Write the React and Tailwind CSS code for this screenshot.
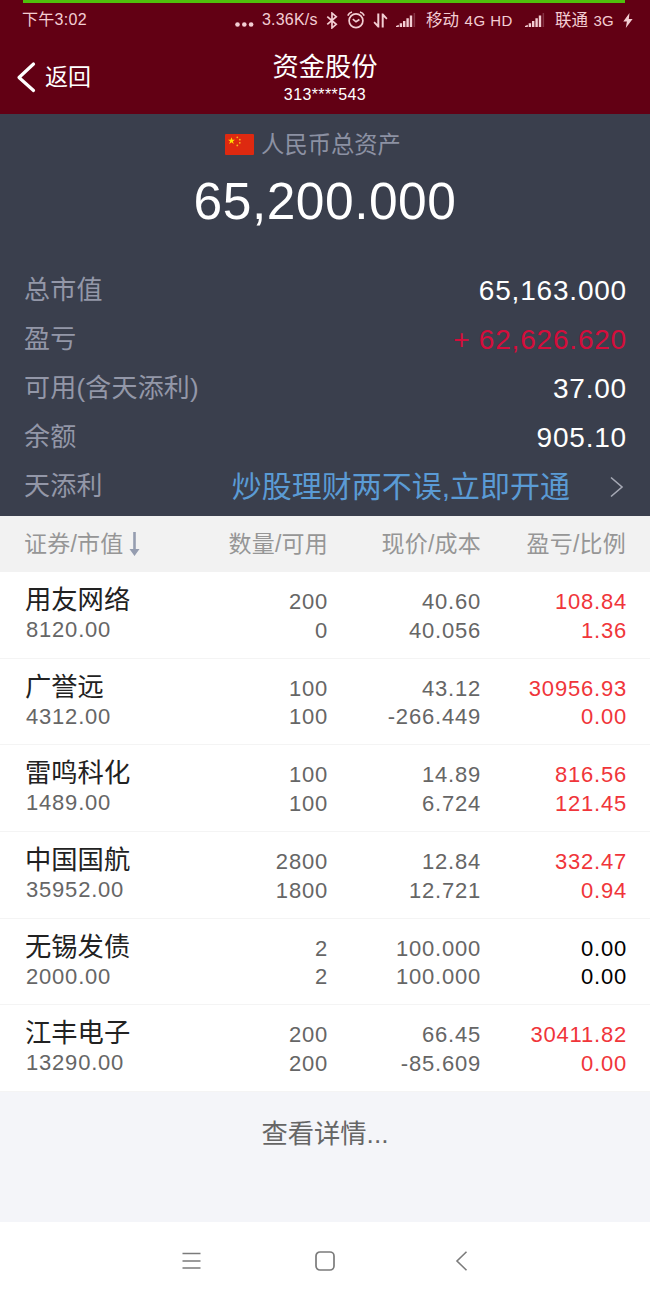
const summary = [
  { label: "总市值", value: "65,163.000", color: "text-white" },
  { label: "盈亏", value: "+ 62,626.620", color: "text-[#d40d3b]" },
  { label: "可用(含天添利)", value: "37.00", color: "text-white" },
  { label: "余额", value: "905.10", color: "text-white" },
];

const holdings = [
  { name: "用友网络", value: "8120.00", qty: "200", available: "0", price: "40.60", cost: "40.056", profit: "108.84", ratio: "1.36" },
  { name: "广誉远", value: "4312.00", qty: "100", available: "100", price: "43.12", cost: "-266.449", profit: "30956.93", ratio: "0.00" },
  { name: "雷鸣科化", value: "1489.00", qty: "100", available: "100", price: "14.89", cost: "6.724", profit: "816.56", ratio: "121.45" },
  { name: "中国国航", value: "35952.00", qty: "2800", available: "1800", price: "12.84", cost: "12.721", profit: "332.47", ratio: "0.94" },
  { name: "无锡发债", value: "2000.00", qty: "2", available: "2", price: "100.000", cost: "100.000", profit: "0.00", ratio: "0.00", flat: true },
  { name: "江丰电子", value: "13290.00", qty: "200", available: "200", price: "66.45", cost: "-85.609", profit: "30411.82", ratio: "0.00" },
];

function Signal() {
  return (
    <svg width="20" height="14" viewBox="0 0 20 14" fill="currentColor">
      <path d="M0 14V13L2.8 11.8V14zM3.7 10.2h2.4V14H3.7zM7 8h2.4v6H7zM10.4 5.200h2.400V14h-2.400zM13.800 2.500h2.400V14h-2.400z" />
      <path d="M17.600 0h1.500v14h-1.500z" opacity=".25" />
    </svg>
  );
}

function StatusBar() {
  return (
    <div className="flex h-10 items-center pl-[22px] pr-[17px] text-[#f3cdd3]">
      <span className="text-[16px] tracking-[0.3px]">下午3:02</span>
      <svg className="ml-auto mt-[9px]" width="19" height="5" viewBox="0 0 19 5" fill="currentColor">
        <circle cx="2.5" cy="2.5" r="2.3" />
        <circle cx="9.3" cy="2.5" r="2.3" />
        <circle cx="16.1" cy="2.5" r="2.3" />
      </svg>
      <span className="ml-[8px] w-[57px] whitespace-nowrap text-[16px] tracking-[0.2px]">3.36K/s</span>
      <svg className="ml-[7px]" width="12" height="17" viewBox="0 0 12 18" fill="none" stroke="currentColor" strokeWidth="1.8">
        <path d="M1 5l9.5 8L6 16.800V1.200L10.500 5 1 13" />
      </svg>
      <svg className="ml-[9px]" width="18" height="18" viewBox="0 0 18 18" fill="none" stroke="currentColor" strokeWidth="1.7">
        <circle cx="9" cy="9.7" r="6.9" />
        <path d="M5.8 8.2L9 10.8l3.4-2.3M.8 4.6Q2 1.8 5 1M17.2 4.6Q16 1.8 13 1" />
      </svg>
      <svg className="ml-[8px]" width="15" height="15" viewBox="0 0 15 15" fill="currentColor">
        <path d="M4.300 .5h2v14h-1.500L.5 9.800l1.100-1.200L4.300 11zM8.700 14.500h2V4l2.700 2.400 1.100-1.200L10.200 .5H8.700z" />
      </svg>
      <span className="ml-[8px]"><Signal /></span>
      <span className="ml-[10px] w-[92px] whitespace-nowrap text-[16.5px]">
        移动 <span className="ml-[1px] text-[15px] tracking-[0.5px]">4G HD</span>
      </span>
      <span className="ml-[7px]"><Signal /></span>
      <span className="ml-[10px] w-[62px] whitespace-nowrap text-[16.5px]">
        联通 <span className="ml-[1px] text-[15px]">3G</span>
      </span>
      <svg className="ml-[6px]" width="10" height="15" viewBox="0 0 10 15" fill="currentColor">
        <path d="M6.5 0L.3 8.4h3.6L2.8 15 9.6 5.9H5.8z" />
      </svg>
    </div>
  );
}

function Flag() {
  return (
    <svg width="29" height="21" viewBox="0 0 29 21">
      <rect width="29" height="21" rx="1" fill="#de2910" />
      <path d="M6.500 3.200l.9 2.500h2.600L7.900 7.300l.8 2.600-2.200-1.600-2.200 1.600.8-2.600L3 5.700h2.600z" fill="#ffde00" />
      <g fill="#f8b51c">
        <circle cx="12.300" cy="3.300" r=".9" />
        <circle cx="14.800" cy="5.700" r=".9" />
        <circle cx="14.800" cy="8.800" r=".9" />
        <circle cx="12.300" cy="11.400" r=".9" />
      </g>
    </svg>
  );
}

export default function App() {
  return (
    <div className="flex h-[1300px] w-[650px] flex-col overflow-hidden bg-white font-['Liberation_Sans','Noto_Sans_CJK_SC',sans-serif]">
      <header className="relative h-[114px] bg-[#620014] text-white">
        <div className="absolute left-[23px] top-0 h-[3px] w-[602px] bg-[#4fc00c]" />
        <StatusBar />
        <div className="grid h-[74px] grid-cols-[1fr_200px_1fr]">
          <div className="flex items-center pl-[16px]">
            <svg width="20" height="32" viewBox="0 0 20 32" fill="none" stroke="currentColor" strokeWidth="3.2" strokeLinecap="round" strokeLinejoin="round">
              <path d="M17.5 3L3 16.5 17.5 29.5" />
            </svg>
            <span className="ml-[9px] text-[23px]">返回</span>
          </div>
          <div className="text-center">
            <h1 className="mt-[10px] text-[26.3px] leading-[34px]">资金股份</h1>
            <p className="text-[16px] leading-[22px] tracking-[0.4px]">313****543</p>
          </div>
        </div>
      </header>

      <section className="h-[402px] bg-[#3a3f4d]">
        <div className="flex h-[61px] items-center justify-center gap-[7px] pr-[24px]">
          <Flag />
          <span className="pt-[2px] text-[23.3px] text-[#8c91a3]">人民币总资产</span>
        </div>
        <div className="h-[91px] text-center text-[51.5px] leading-[52px] tracking-[0.5px] text-white">
          65,200.000
        </div>
        <div className="pl-6 pr-[23px]">
          {summary.map((row) => (
            <div key={row.label} className="flex h-[49px] items-center justify-between">
              <span className="text-[26px] tracking-[0.2px] text-[#9397a8]">{row.label}</span>
              <span className={`text-[28px] tracking-[0.8px] ${row.color}`}>{row.value}</span>
            </div>
          ))}
          <div className="flex h-[49px] items-center">
            <span className="text-[26px] tracking-[0.2px] text-[#9397a8]">天添利</span>
            <span className="ml-auto text-[30px] text-[#5a9bd5]">炒股理财两不误,立即开通</span>
            <svg className="ml-[39px] mr-[3px]" width="15" height="22" viewBox="0 0 15 22" fill="none" stroke="#a6a9b5" strokeWidth="1.6">
              <path d="M2 1.5L13 11 2 20.5" />
            </svg>
          </div>
        </div>
      </section>

      <section>
        <div className="grid h-14 grid-cols-[151px_153px_153px_145px] items-center bg-[#f2f2f2] pl-[24px] text-right text-[23px] tracking-[0.2px] text-[#969696]">
          <span className="flex items-center gap-[6px] whitespace-nowrap">
            证券/市值
            <svg width="11" height="24" viewBox="0 0 10 24" fill="#959db0">
              <path d="M3.7 0h2.6v17H10l-5 7-5-7h3.7z" />
            </svg>
          </span>
          <span>数量/可用</span>
          <span>现价/成本</span>
          <span>盈亏/比例</span>
        </div>
        {holdings.map((item) => (
          <div
            key={item.name}
            className="grid h-[86.7px] grid-cols-[150px_153px_153px_146px] border-b border-[#f4f4f4] pl-[25px] pt-4 text-right text-[22px] leading-[28.5px] tracking-[0.8px] text-[#666]"
          >
            <div className="-mt-1 text-left">
              <div className="text-[26.3px] leading-8 tracking-normal text-[#222]">{item.name}</div>
              <div className="pl-px">{item.value}</div>
            </div>
            <div>
              <div>{item.qty}</div>
              <div>{item.available}</div>
            </div>
            <div>
              <div>{item.price}</div>
              <div>{item.cost}</div>
            </div>
            <div className={item.flat ? "text-black" : "text-[#f0353a]"}>
              <div>{item.profit}</div>
              <div>{item.ratio}</div>
            </div>
          </div>
        ))}
      </section>

      <div className="h-[130px] bg-[#f4f5f9] pt-[22px] text-center text-[26.3px] leading-10 text-[#666]">
        查看详情...
      </div>

      <nav className="flex flex-1 items-center justify-center gap-[113px] text-[#7b7b7b]">
        <svg width="20" height="20" viewBox="0 0 20 20" stroke="currentColor" strokeWidth="1.6">
          <path d="M.5 2.5h18M.5 10h18M.5 17h18" />
        </svg>
        <svg width="20" height="20" viewBox="0 0 20 20" fill="none" stroke="currentColor" strokeWidth="1.7">
          <rect x="1" y="1" width="18" height="18" rx="4" />
        </svg>
        <svg width="20" height="20" viewBox="0 0 20 20" fill="none" stroke="currentColor" strokeWidth="1.6">
          <path d="M18.5 .8L9 10l9.5 9.2" />
        </svg>
      </nav>
    </div>
  );
}
